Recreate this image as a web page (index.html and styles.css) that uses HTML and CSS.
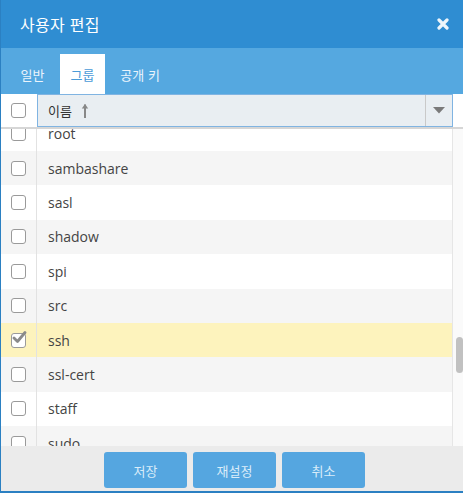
FILE: index.html
```html
<!DOCTYPE html>
<html lang="ko">
<head>
<meta charset="utf-8">
<title>사용자 편집</title>
<link rel="stylesheet" href="styles.css">
</head>
<body>
<div class="dialog">
  <div class="header">
    <span class="title">사용자 편집</span>
    <svg class="close" width="12" height="12" viewBox="0 0 12 12"><path d="M2 2 L10 10 M10 2 L2 10" stroke="#fff" stroke-width="3.2" stroke-linecap="round"/></svg>
  </div>
  <div class="tabs">
    <div class="tab">일반</div>
    <div class="tab active">그룹</div>
    <div class="tab">공개 키</div>
  </div>
  <div class="grid">
    <div class="grid-head">
      <div class="check-cell"><span class="cb"></span></div>
      <div class="name-head">
        <span class="head-label">이름</span>
        <svg class="sort" width="8" height="16" viewBox="0 0 8 16"><path d="M4 1.5 L4 15" stroke="#888" stroke-width="2"/><path d="M0.8 5.5 L4 1 L7.2 5.5 Z" fill="#888"/></svg>
        <span class="drop"><svg width="12" height="7" viewBox="0 0 12 7"><path d="M0 0 H12 L6 6.5 Z" fill="#7a7a7a"/></svg></span>
      </div>
      <div class="head-spacer"></div>
    </div>
    <div class="grid-body">
      <div class="rows-viewport">
        <div class="rows">
          <div class="row"><div class="check-cell"><span class="cb"></span></div><div class="name">root</div></div>
          <div class="row alt"><div class="check-cell"><span class="cb"></span></div><div class="name">sambashare</div></div>
          <div class="row"><div class="check-cell"><span class="cb"></span></div><div class="name">sasl</div></div>
          <div class="row alt"><div class="check-cell"><span class="cb"></span></div><div class="name">shadow</div></div>
          <div class="row"><div class="check-cell"><span class="cb"></span></div><div class="name">spi</div></div>
          <div class="row alt"><div class="check-cell"><span class="cb"></span></div><div class="name">src</div></div>
          <div class="row selected"><div class="check-cell"><span class="cb checked"><svg width="16" height="14" viewBox="0 0 16 14"><path d="M3 7 L6.5 10.5 L14 1.5" stroke="#8a8a8a" stroke-width="2.8" fill="none" stroke-linecap="round" stroke-linejoin="round"/></svg></span></div><div class="name">ssh</div></div>
          <div class="row alt"><div class="check-cell"><span class="cb"></span></div><div class="name">ssl-cert</div></div>
          <div class="row"><div class="check-cell"><span class="cb"></span></div><div class="name">staff</div></div>
          <div class="row alt"><div class="check-cell"><span class="cb"></span></div><div class="name">sudo</div></div>
        </div>
      </div>
      <div class="scrollbar"><div class="thumb"></div></div>
    </div>
  </div>
  <div class="footer">
    <button class="btn">저장</button>
    <button class="btn">재설정</button>
    <button class="btn">취소</button>
  </div>
</div>
</body>
</html>
```

FILE: styles.css
```css
* { box-sizing: border-box; }
html, body { margin: 0; padding: 0; background: #fff; }
body {
  font-family: "Open Sans", "Noto Sans CJK KR", sans-serif;
  width: 463px;
  height: 493px;
  overflow: hidden;
}
.dialog {
  width: 463px;
  height: 493px;
  display: flex;
  flex-direction: column;
  border-left: 1px solid #2b80c2;
  border-bottom: 2px solid #2b80c2;
}
.header {
  height: 48px;
  flex: none;
  background: #2f8dd2;
  display: flex;
  align-items: center;
  justify-content: space-between;
  padding: 0 14px 0 19px;
}
.title {
  color: #fff;
  font-size: 16px;
  font-family: "Noto Sans CJK KR", sans-serif;
  letter-spacing: 0.3px;
}
.close { opacity: 0.92; }
.tabs {
  height: 46px;
  flex: none;
  background: #55a8e0;
  display: flex;
  align-items: flex-end;
  padding-left: 9px;
  gap: 5px;
}
.tab {
  height: 40px;
  padding: 0 10.5px;
  display: flex;
  align-items: center;
  font-family: "Noto Sans CJK KR", sans-serif;
  font-size: 13px;
  color: #eaf4fc;
}
.tab.active {
  background: #fff;
  color: #4a9bd8;
}
.grid {
  flex: 1;
  display: flex;
  flex-direction: column;
  min-height: 0;
}
.grid-head {
  height: 35px;
  flex: none;
  display: flex;
  border-bottom: 2px solid #d6d6d6;
}
.check-cell {
  width: 36px;
  flex: none;
  display: flex;
  align-items: center;
  justify-content: center;
  padding-right: 1px;
}
.cb {
  width: 15px;
  height: 15px;
  border: 1.5px solid #9a9a9a;
  border-radius: 3px;
  background: #fff;
  position: relative;
  display: block;
}
.cb.checked svg {
  position: absolute;
  left: -0.5px;
  top: -2.5px;
}
.name-head {
  width: 416px;
  flex: none;
  background: #e9eef2;
  border: 1px solid #80b4e2;
  display: flex;
  align-items: center;
  padding-left: 10px;
}
.head-label {
  font-family: "Noto Sans CJK KR", sans-serif;
  font-size: 13px;
  color: #333;
}
.sort { margin-left: 9px; margin-top: 1px; }
.drop {
  margin-left: auto;
  width: 27px;
  height: 100%;
  border-left: 1px solid #c9c9c9;
  display: flex;
  align-items: center;
  justify-content: center;
}
.head-spacer { flex: 1; }
.grid-body {
  flex: 1;
  min-height: 0;
  display: flex;
}
.rows-viewport {
  width: 451px;
  flex: none;
  overflow: hidden;
}
.rows { margin-top: -12.4px; }
.row {
  height: 34.4px;
  display: flex;
  background: #fff;
}
.row.alt { background: #f5f5f5; }
.row.selected { background: #fdf3bd; }
.row .check-cell { border-right: 1px solid #e2e2e2; }
.name {
  display: flex;
  align-items: center;
  padding-left: 11px;
  font-size: 14px;
  color: #444;
}
.scrollbar {
  flex: 1;
  border-left: 1px solid #e6e6e6;
  background: #fafafa;
  position: relative;
}
.thumb {
  position: absolute;
  left: 3px;
  top: 208px;
  width: 7px;
  height: 36px;
  border-radius: 4px;
  background: #c1c1c1;
}
.footer {
  height: 45px;
  flex: none;
  background: #ebebeb;
  display: flex;
  align-items: flex-start;
  padding: 6px 0 0 103px;
  gap: 6px;
}
.btn {
  width: 83px;
  height: 36px;
  border: none;
  border-radius: 3px;
  background: #55a6e0;
  color: #d9ecf9;
  font-family: "Noto Sans CJK KR", sans-serif;
  font-size: 13px;
  padding: 0;
}
```
